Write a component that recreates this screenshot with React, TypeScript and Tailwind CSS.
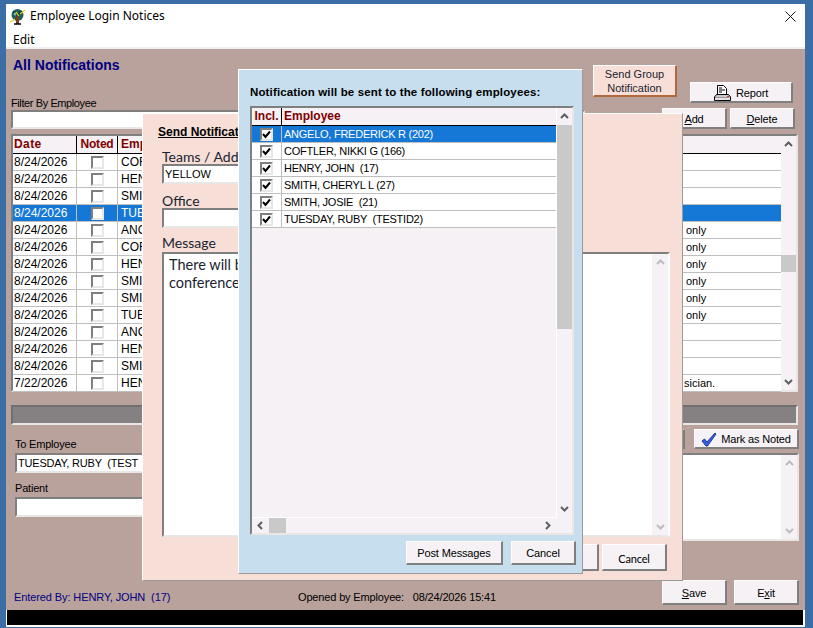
import type { ReactNode } from "react";

const raised = "border border-t-white border-l-white border-r-2 border-b-2 border-r-[#7f7f7f] border-b-[#7f7f7f] bg-[#f5f1f5]";
const sunken = "border-2 border-t-[#7f7f7f] border-l-[#7f7f7f] border-r-[#e9e6e6] border-b-[#e9e6e6] bg-white";

const rows = [
  { date: "8/24/2026", emp: "COF", msg: "" },
  { date: "8/24/2026", emp: "HEN", msg: "" },
  { date: "8/24/2026", emp: "SMIT", msg: "" },
  { date: "8/24/2026", emp: "TUE", msg: "", selected: true },
  { date: "8/24/2026", emp: "ANG", msg: "only" },
  { date: "8/24/2026", emp: "COF", msg: "only" },
  { date: "8/24/2026", emp: "HEN", msg: "only" },
  { date: "8/24/2026", emp: "SMIT", msg: "only" },
  { date: "8/24/2026", emp: "SMIT", msg: "only" },
  { date: "8/24/2026", emp: "TUE", msg: "only" },
  { date: "8/24/2026", emp: "ANG", msg: "" },
  { date: "8/24/2026", emp: "HEN", msg: "" },
  { date: "8/24/2026", emp: "SMIT", msg: "" },
  { date: "7/22/2026", emp: "HEN", msg: "sician.", last: true },
];

const recipients = [
  "ANGELO, FREDERICK R (202)",
  "COFTLER, NIKKI G (166)",
  "HENRY, JOHN  (17)",
  "SMITH, CHERYL L (27)",
  "SMITH, JOSIE  (21)",
  "TUESDAY, RUBY  (TESTID2)",
];

function Chevron({ dir, light }: { dir: "up" | "down" | "left" | "right"; light?: boolean }) {
  const d = {
    up: "M1 6 L4.5 2.5 L8 6",
    down: "M1 3 L4.5 6.5 L8 3",
    left: "M6 1 L2.5 4.5 L6 8",
    right: "M3 1 L6.5 4.5 L3 8",
  }[dir];
  return (
    <svg width="9" height="9" viewBox="0 0 9 9" fill="none">
      <path d={d} stroke={light ? "#bdbdbd" : "#5f5f5f"} strokeWidth="2" />
    </svg>
  );
}

function Check({ checked }: { checked?: boolean }) {
  return (
    <div className={`flex h-[13px] w-[13px] items-center justify-center ${sunken}`}>
      {checked && (
        <svg width="9" height="9" viewBox="0 0 9 9" fill="none">
          <path d="M1 4 L3.5 7 L8 1.5" stroke="#000" strokeWidth="2" />
        </svg>
      )}
    </div>
  );
}

function Btn({ className, children }: { className: string; children?: ReactNode }) {
  return (
    <div className={`flex shrink-0 items-center justify-center pt-[2px] text-[11px] tracking-[-0.15px] text-black ${raised} ${className}`}>
      {children}
    </div>
  );
}

function PrinterIcon() {
  return (
    <svg width="17" height="17" viewBox="0 0 17 17" fill="none">
      <path d="M3.5 0.5 H9.5 L12.5 3.5 V9.5 H3.5 Z" fill="#fff" stroke="#000" />
      <path d="M5 3 H8 M5 5 H11 M5 7 H8" stroke="#000" />
      <path d="M2.5 9.5 H14.5 L16.5 12 V15.5 H0.5 V12 Z" fill="#c8c8c8" stroke="#000" />
      <path d="M1.5 12.5 H15.5" stroke="#666" strokeDasharray="1 1" />
      <path d="M1 14 H16" stroke="#fff" />
      <rect x="13" y="11" width="2" height="1" fill="#e03030" />
    </svg>
  );
}

function BlueCheckIcon() {
  return (
    <svg width="16" height="15" viewBox="0 0 16 15" fill="none">
      <path d="M1 9 L3.5 7 L6 10 L14 1 L15 2 L6.5 14 L5 14 Z" fill="#2f62e0" stroke="#1a3a9c" strokeWidth="1" strokeLinejoin="round" />
    </svg>
  );
}

function AppIcon() {
  return (
    <svg width="17" height="17" viewBox="0 0 17 17" fill="none">
      <circle cx="8.5" cy="7" r="6" fill="#1d5f5a" />
      <path d="M4 3.5 L8 7 M13 3 L9 7" stroke="#0a2a28" strokeWidth="1.5" />
      <circle cx="6" cy="6" r="1.5" fill="#7fb8a8" />
      <rect x="7" y="8" width="3" height="8" fill="#7a3d20" />
      <path d="M1 14 L6 11 M16 2 L11 6 M7 4 L10 8" stroke="#e8d820" strokeWidth="1.2" />
      <path d="M5 16 H12" stroke="#000" strokeWidth="1.5" />
    </svg>
  );
}

function Scrollbar({ className, thumb, light }: { className: string; thumb: ReactNode; light?: boolean }) {
  return (
    <div className={`flex shrink-0 flex-col items-center bg-[#f5f1f5] ${className}`}>
      <div className="flex h-[17px] items-center">
        <Chevron dir="up" light={light} />
      </div>
      <div className="w-full flex-1">{thumb}</div>
      <div className="flex h-[17px] items-center">
        <Chevron dir="down" light={light} />
      </div>
    </div>
  );
}

function MainTable() {
  return (
    <div className="ml-[5px] mt-[5px] flex h-[258px] w-[787px] shrink-0 border-2 border-t-[#7f7f7f] border-l-[#7f7f7f] border-r-[#e9e6e6] border-b-[#e9e6e6] bg-[#f5f1f5] text-[12px]">
      <div className="w-[768px] shrink-0">
        <div className="flex h-[18px] border-b border-black font-bold text-[#800000]">
          <div className="w-[64px] border-r border-black pl-[1px] leading-[17px] tracking-[0.4px]">Date</div>
          <div className="w-[41px] border-r border-black text-center leading-[17px] tracking-[-0.2px]">Noted</div>
          <div className="flex-1 pl-[3px] leading-[17px]">Emp</div>
        </div>
        {rows.map((r, i) => (
          <div key={i} className={`flex h-[17px] border-b border-[#bfbfbf] leading-[16px] ${r.selected ? "bg-[#1578d6] text-white" : "bg-white text-black"}`}>
            <div className="w-[64px] border-r border-[#bfbfbf] pl-[1px]">{r.date}</div>
            <div className="flex w-[41px] items-center justify-center border-r border-[#bfbfbf]">
              <Check />
            </div>
            <div className="w-[565px] pl-[3px]">{r.emp}</div>
            <div className={`flex-1 text-[11px] ${r.last ? "pl-[1px]" : "pl-[3px]"}`}>{r.msg}</div>
          </div>
        ))}
      </div>
      <Scrollbar
        className="w-[15px]"
        thumb={
          <div className="h-full w-full pt-[102px]">
            <div className="h-[17px] w-full bg-[#c9c9c9]" />
          </div>
        }
      />
    </div>
  );
}

function PinkDialog() {
  return (
    <div className="absolute left-[136px] top-[64px] h-[468px] w-[541px] border border-t-white border-l-white border-r-[#9a9a9a] border-b-[#9a9a9a] bg-[#f7ded7] pl-[19px] font-['Lato',sans-serif] text-[14px] leading-[18px] text-[#1a2430]">
      <div className="-ml-[4px] mt-[11px] font-['Liberation_Sans',sans-serif] text-[12px] font-bold leading-[14px] text-black underline">Send Notificat</div>
      <div className="mt-[9px] h-[16px]">Teams / Add</div>
      <div className={`h-[20px] w-[300px] pl-[1px] font-['Liberation_Sans',sans-serif] text-[11px] leading-[16px] text-black ${sunken}`}>YELLOW</div>
      <div className="mt-[8px] h-[16px] leading-[17px]">Office</div>
      <div className={`h-[20px] w-[300px] ${sunken}`} />
      <div className="mt-[6px] h-[17px] leading-[18px]">Message</div>
      <div className={`mt-[1px] flex h-[285px] w-[508px] border-r-white ${sunken}`}>
        <div className="flex-1 pl-[5px] pt-[2px] text-[14.5px] leading-[18px] text-[#1a2430]">
          There will b
          <br />
          conference
        </div>
        <Scrollbar className="w-[16px]" thumb={null} light />
      </div>
      <div className="mt-[7px] flex h-[27px] w-[505px] justify-end gap-[3px]">
        <Btn className="w-[65px]" />
        <Btn className="w-[65px] pt-[3px]">Cancel</Btn>
      </div>
    </div>
  );
}

function BlueDialog() {
  return (
    <div className="absolute left-[232px] top-[20px] h-[505px] w-[345px] border border-t-white border-l-white border-r-[#9a9a9a] border-b-[#9a9a9a] bg-[#c6deee]">
      <div className="ml-[11px] mt-[15px] text-[11.5px] font-bold leading-[14px] tracking-[0.14px] text-black">Notification will be sent to the following employees:</div>
      <div className="ml-[11px] mt-[7px] flex h-[429px] w-[324px] flex-col border-2 border-t-[#7f7f7f] border-l-[#7f7f7f] border-r-[#e9e6e6] border-b-[#e9e6e6] bg-[#f5f1f5] text-[11px]">
        <div className="flex min-h-0 flex-1">
          <div className="w-[305px] shrink-0 border-r border-white">
            <div className="flex h-[18px] border-b border-black text-[12px] font-bold leading-[17px] text-[#800000]">
              <div className="w-[30px] border-r border-black text-center">Incl.</div>
              <div className="flex-1 pl-[2px]">Employee</div>
            </div>
            {recipients.map((name, i) => (
              <div key={name} className={`flex h-[17px] border-b border-[#bfbfbf] leading-[17px] tracking-[-0.25px] ${i === 0 ? "bg-[#1578d6] text-white" : "bg-white text-black"}`}>
                <div className="flex w-[30px] items-center justify-center border-r border-[#bfbfbf]">
                  <Check checked />
                </div>
                <div className="flex-1 whitespace-pre pl-[2px]">{name}</div>
              </div>
            ))}
          </div>
          <Scrollbar
            className="w-[15px]"
            thumb={
              <div className="h-[204px] w-full bg-[#c9c9c9]" />
            }
          />
        </div>
        <div className="flex h-[16px] w-[305px] shrink-0 items-center justify-between border-t border-white pl-[4px] pr-[5px]">
          <div className="flex items-center gap-[4px]">
            <Chevron dir="left" />
            <div className="h-[15px] w-[17px] bg-[#c9c9c9]" />
          </div>
          <Chevron dir="right" />
        </div>
      </div>
      <div className="mr-[6px] mt-[6px] flex justify-end gap-[8px]">
        <Btn className="h-[24px] w-[97px]">Post Messages</Btn>
        <Btn className="h-[24px] w-[65px]">Cancel</Btn>
      </div>
    </div>
  );
}

export default function App() {
  return (
    <div className="h-[628px] w-[813px] overflow-hidden bg-[#3a6ea5] pl-[6px] pt-[4px] font-['Liberation_Sans',sans-serif]">
      <div className="flex h-[623px] w-[799px] flex-col">
        <div className="flex h-[24px] shrink-0 items-center bg-white pl-[3px] pr-[9px] font-['Noto_Sans',sans-serif] text-[12px] text-black">
          <AppIcon />
          <span className="ml-[4px]">Employee Login Notices</span>
          <svg className="ml-auto" width="11" height="11" viewBox="0 0 11 11" fill="none">
            <path d="M0.5 0.5 L10.5 10.5 M10.5 0.5 L0.5 10.5" stroke="#111" />
          </svg>
        </div>
        <div className="h-[19px] shrink-0 bg-white pl-[7px] font-['Noto_Sans',sans-serif] text-[12px] leading-[23px] text-black">Edit</div>
        <div className="h-[2px] shrink-0 bg-[#f0f0f0]" />

        <div className="relative flex min-h-0 flex-1 flex-col bg-[#b9a29c] text-[11px] text-black">
          <div className="flex h-[59px] shrink-0">
            <div className="flex-1 pl-[7px]">
              <div className="mt-[8px] text-[14px] font-bold leading-[16px] text-[#000080]">All Notifications</div>
              <div className="-ml-[2px] mt-[23px] leading-[14px] tracking-[-0.4px]">Filter By Employee</div>
            </div>
            <div className="mt-[16px] flex h-[32px] w-[84px] flex-col items-center justify-center border border-t-white border-l-white border-r-2 border-b-2 border-r-[#b0683f] border-b-[#b0683f] bg-[#f7ded7] text-center text-[11px] leading-[14px] text-[#1a2430]">
              Send Group
              <br />
              Notification
            </div>
            <Btn className="ml-[13px] mr-[12px] mt-[33px] h-[21px] w-[103px] gap-[5px]">
              <PrinterIcon />
              Report
            </Btn>
          </div>
          <div className="flex h-[21px] shrink-0">
            <div className={`ml-[5px] mt-[2px] h-[19px] w-[574px] ${sunken}`} />
            <Btn className="ml-[77px] w-[65px]">
              <span>
                <u>A</u>dd
              </span>
            </Btn>
            <Btn className="ml-[3px] w-[65px]">
              <span>
                <u>D</u>elete
              </span>
            </Btn>
          </div>

          <MainTable />

          <div className="ml-[5px] mt-[13px] h-[20px] w-[787px] shrink-0 border-2 border-t-[#6f6f6f] border-l-[#6f6f6f] border-r-[#e9e6e6] border-b-[#e9e6e6] bg-[#858183]" />

          <div className="mt-[4px] flex shrink-0">
            <div className="ml-[9px] w-[300px] shrink-0 tracking-[-0.2px]">
              <div className="mt-[8px] h-[16px] leading-[15px]">To Employee</div>
              <div className={`h-[20px] whitespace-pre pl-[1px] leading-[16px] ${sunken}`}>TUESDAY, RUBY  (TEST</div>
              <div className="mt-[8px] h-[16px] leading-[15px]">Patient</div>
              <div className={`h-[20px] ${sunken}`} />
            </div>
            <div className="ml-[35px] w-[449px] shrink-0">
              <div className="flex h-[20px] justify-end">
                <Btn className="mr-[9px] w-[65px]" />
                <Btn className="w-[105px] gap-[4px]">
                  <BlueCheckIcon />
                  Mark as Noted
                </Btn>
              </div>
              <div className={`mt-[4px] flex h-[88px] w-full justify-end ${sunken}`}>
                <Scrollbar className="w-[16px]" thumb={null} light />
              </div>
            </div>
          </div>

          <div className="mt-auto flex h-[30px] shrink-0 items-start pb-[5px]">
            <div className="ml-[8px] mt-[10px] w-[284px] whitespace-pre leading-[14px] tracking-[-0.1px] text-[#000080]">Entered By: HENRY, JOHN  (17)</div>
            <div className="mt-[10px] w-[364px] whitespace-pre leading-[14px] tracking-[-0.15px]">Opened by Employee:   08/24/2026 15:41</div>
            <Btn className="h-[25px] w-[65px]">
              <span>
                <u>S</u>ave
              </span>
            </Btn>
            <Btn className="ml-[7px] h-[25px] w-[65px]">
              <span>
                E<u>x</u>it
              </span>
            </Btn>
          </div>

          <PinkDialog />
          <BlueDialog />
        </div>

        <div className="h-[17px] shrink-0 bg-white pl-[1px] pr-[2px]">
          <div className="h-[15px] bg-black" />
        </div>
      </div>
    </div>
  );
}
